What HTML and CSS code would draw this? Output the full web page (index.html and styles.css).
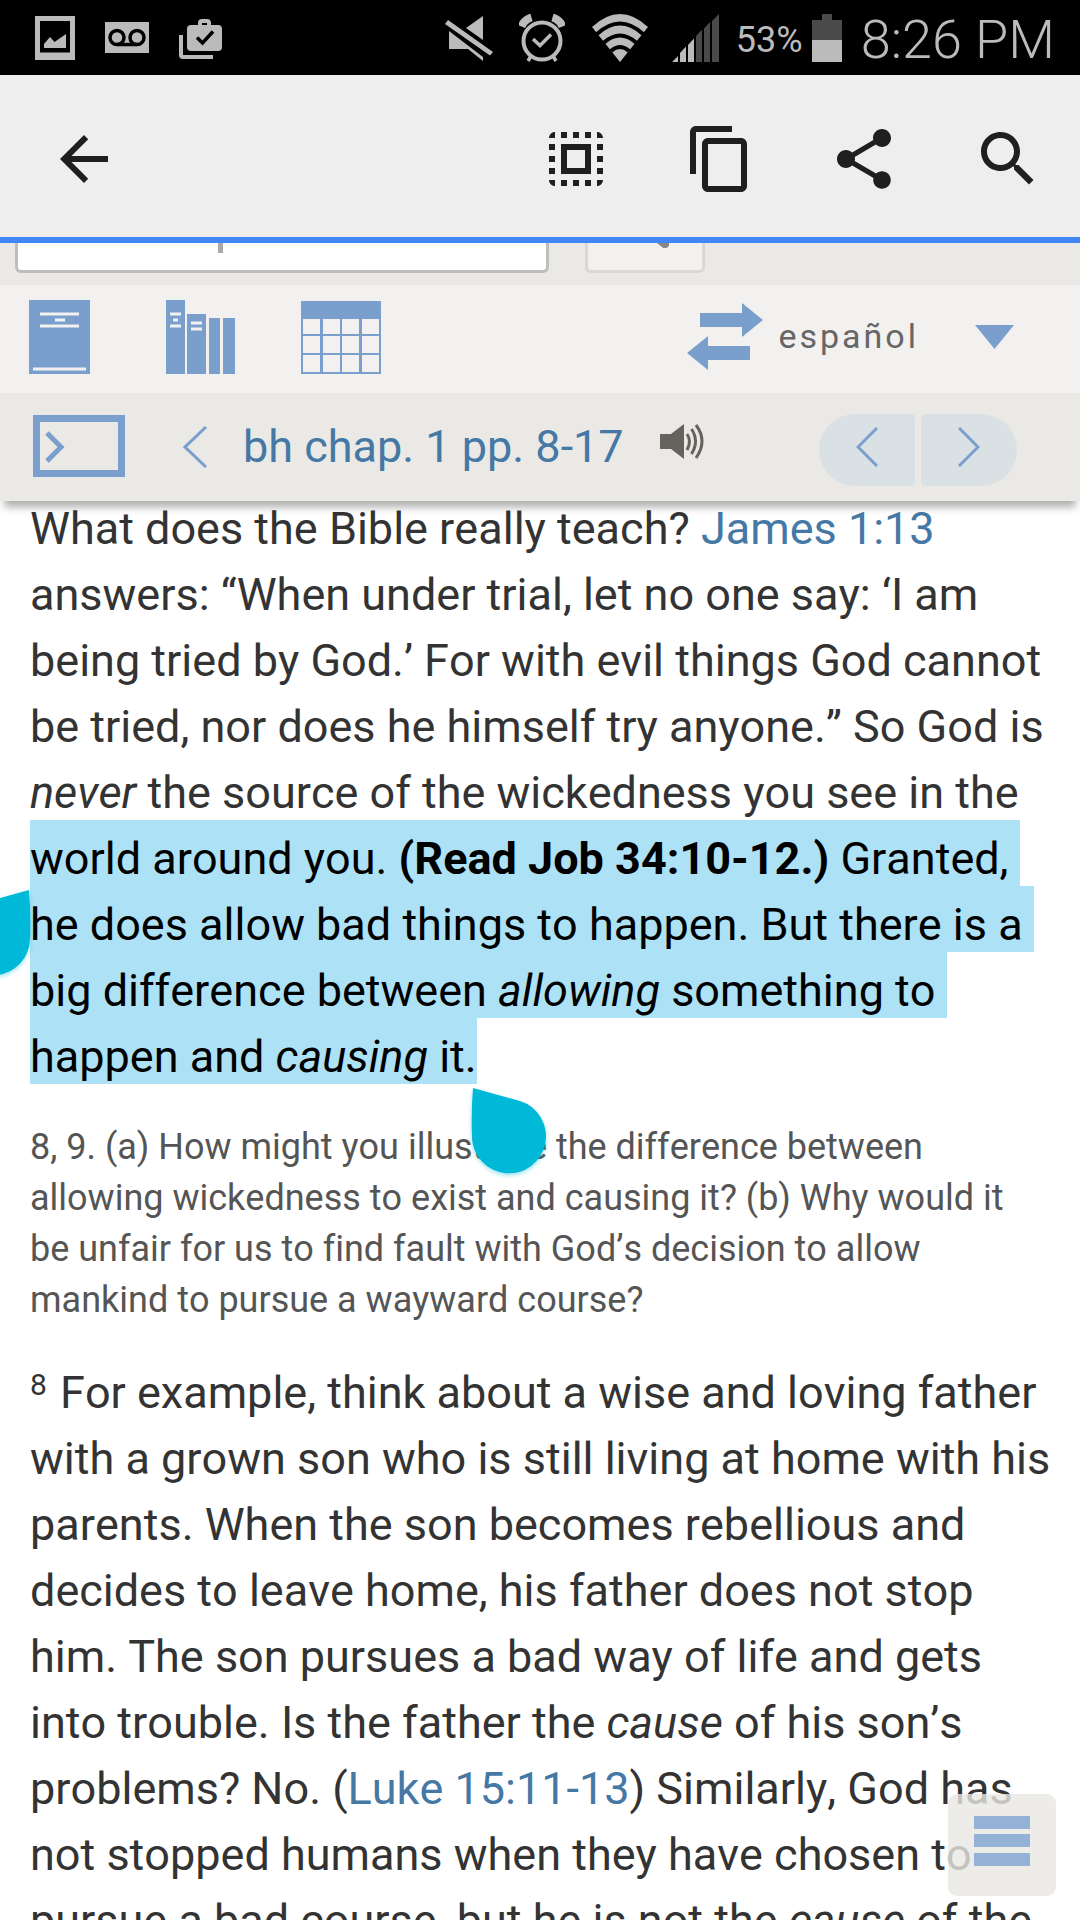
FILE: index.html
```html
<!DOCTYPE html>
<html lang="en">
<head>
<meta charset="utf-8">
<meta name="viewport" content="width=device-width, initial-scale=1">
<title>bh chap. 1 pp. 8-17</title>
<link rel="stylesheet" href="styles.css">
</head>
<body>
<div class="status">
  <div class="status-left">
    <svg width="40" height="44" viewBox="0 0 40 44"><path fill="#bbb" fill-rule="evenodd" d="M0 0h40v44H0zM5 5v31.500h30V5z"/><path fill="#bbb" d="M9 32v-4l6-7 4.500 5L31 18v14z"/></svg>
    <svg width="44" height="44" viewBox="0 0 44 44"><path fill="#bbb" d="M0 6h44v31H0z"/><g fill="none" stroke="#000" stroke-width="3.500"><circle cx="12" cy="21.500" r="7"/><circle cx="32" cy="21.500" r="7"/><path d="M12 28.500h20"/></g></svg>
    <svg width="44" height="44" viewBox="0 0 44 44"><path fill="none" stroke="#bbb" stroke-width="4" d="M2 19v20q0 2 2 2h30"/><rect x="8" y="9" width="35" height="26" rx="4" fill="#bbb"/><path fill="none" stroke="#bbb" stroke-width="4" d="M21 10V7q0-2 2-2h5q2 0 2 2v3"/><path fill="none" stroke="#000" stroke-width="3.500" d="M18 21.500l5.500 5.500L34 15.500"/></svg>
  </div>
  <div class="status-right">
    <svg width="48" height="48" viewBox="0 0 48 48" fill="#bbb"><path d="M3 6L48 38l-3 3.500L0 10zM38 2v24L21 14zM4 17l34 26v4L23 35H4z"/></svg>
    <svg class="alarm" width="46" height="48" viewBox="0 0 46 48"><g fill="none" stroke="#bbb"><circle cx="23" cy="27" r="18.500" stroke-width="4"/><path stroke-width="3.500" d="M14 25l7 6.500 11-11M12 42l-3 5M34 42l3 5"/><path stroke-width="8" d="M2.500 12.500q3-7 10-9M43.500 12.500q-3-7-10-9"/></g></svg>
    <svg class="wifi" width="56" height="48" viewBox="0 0 56 48"><path fill="#bbb" d="M28 48L0 13Q28-13 56 13z"/><g fill="none" stroke="#000" stroke-width="4"><path d="M5 20Q28-1 51 20M12 28.500q16-14 32 0M19 37q9-8 18 0"/></g></svg>
    <svg width="48" height="48" viewBox="0 0 48 48"><path fill="#bbb" d="M0 48l6-6v6zM8 48v-9l6-6.500V48zM16 48V31l6-6.500V48z"/><path fill="#4a4a4a" d="M24 48V22l6-6.500V48zM32 48V14.500l6-6.500V48zM40 48V7l7-7v48z"/></svg>
    <span class="percent">53%</span>
    <svg class="battery" width="30" height="48" viewBox="0 0 30 48"><path fill="#4a4a4a" d="M0 6h10V0h10v6h10v20H0z"/><path fill="#bbb" d="M0 26h30v22H0z"/></svg>
    <span class="clock">8:26 PM</span>
  </div>
</div>

<div class="appbar">
  <button class="bar-button back" aria-label="Back"><svg viewBox="0 0 24 24"><path d="M20 11H7.830l5.590-5.590L12 4l-8 8 8 8 1.410-1.410L7.830 13H20z"/></svg></button>
  <button class="bar-button" aria-label="Select all"><svg viewBox="0 0 24 24"><path d="M3 5h2V3c-1.100 0-2 .9-2 2zm0 8h2v-2H3v2zm4 8h2v-2H7v2zM3 9h2V7H3v2zm10-6h-2v2h2V3zm6 0v2h2c0-1.100-.9-2-2-2zM5 21v-2H3c0 1.100.9 2 2 2zm-2-4h2v-2H3v2zM9 3H7v2h2V3zm2 18h2v-2h-2v2zm8-8h2v-2h-2v2zm0 8c1.100 0 2-.9 2-2h-2v2zm0-12h2V7h-2v2zm0 8h2v-2h-2v2zm-4 4h2v-2h-2v2zm0-16h2V3h-2v2zM7 17h10V7H7v10zm2-8h6v6H9V9z"/></svg></button>
  <button class="bar-button" aria-label="Copy"><svg viewBox="0 0 24 24"><path d="M16 1H4c-1.100 0-2 .9-2 2v14h2V3h12V1zm3 4H8c-1.100 0-2 .9-2 2v14c0 1.100.9 2 2 2h11c1.100 0 2-.9 2-2V7c0-1.100-.9-2-2-2zm0 16H8V7h11v14z"/></svg></button>
  <button class="bar-button" aria-label="Share"><svg viewBox="0 0 24 24"><path d="M18 16.080c-.76 0-1.440.3-1.960.77L8.910 12.700c.05-.23.09-.46.09-.7s-.04-.47-.09-.7l7.050-4.110c.54.5 1.250.81 2.040.81 1.660 0 3-1.340 3-3s-1.340-3-3-3-3 1.340-3 3c0 .24.04.47.09.7L8.040 9.810C7.500 9.310 6.790 9 6 9c-1.660 0-3 1.340-3 3s1.340 3 3 3c.79 0 1.500-.31 2.040-.81l7.120 4.160c-.05.21-.08.43-.08.65 0 1.610 1.310 2.920 2.920 2.920s2.920-1.310 2.920-2.920-1.310-2.920-2.920-2.920z"/></svg></button>
  <button class="bar-button" aria-label="Search"><svg viewBox="0 0 24 24"><path d="M15.500 14h-.79l-.28-.27C15.410 12.590 16 11.110 16 9.500 16 5.910 13.090 3 9.500 3S3 5.910 3 9.500 5.910 16 9.500 16c1.610 0 3.090-.59 4.230-1.570l.27.28v.79l5 4.990L20.490 19l-4.990-5zm-6 0C7.010 14 5 11.990 5 9.500S7.010 5 9.500 5 14 7.010 14 9.500 11.990 14 9.500 14z"/></svg></button>
</div>

<header class="site">
  <form class="search-row">
    <input class="search-box" type="text" aria-label="Search">
    <button class="search-button" type="button" aria-label="Search"><svg width="12" height="5" viewBox="0 0 12 5"><path fill="#888682" d="M0 0h12v3q-4 4-7 1z"/></svg></button>
  </form>
  <nav class="tools">
    <a class="tool" href="#" aria-label="Bible"><svg width="61" height="74" viewBox="0 0 61 74"><path fill="#7a9fcd" d="M0 0h61v74H0z"/><path stroke="#f2f1ef" stroke-width="3" d="M11 14h39M26 20h10M11 26h39M4 69h53"/></svg></a>
    <a class="tool library" href="#" aria-label="Publications"><svg width="69" height="74" viewBox="0 0 69 74"><path fill="#7a9fcd" d="M0 0h19v74H0zM21 14h19v60H21zM43 18h11v56H43zM57 18h12v56H57z"/><path stroke="#f2f1ef" stroke-width="3" d="M4 14h11M7 20h5M4 26h11M25 23h11M25 29h11"/></svg></a>
    <a class="tool" href="#" aria-label="Meetings"><svg width="80" height="74" viewBox="0 0 80 74"><path fill="#7a9fcd" fill-rule="evenodd" d="M0 1h80v73H0zM2 19v15h17V19zM22 19v15h17V19zM41 19v15h17V19zM61 19v15h17V19zM2 36v17h17V36zM22 36v17h17V36zM41 36v17h17V36zM61 36v17h17V36zM2 55v17h17V55zM22 55v17h17V55zM41 55v17h17V55zM61 55v17h17V55z"/></svg></a>
    <a class="language" href="#"><svg width="76" height="68" viewBox="0 0 76 68"><path fill="#7a9fcd" d="M13 11h42V1l21 17-21 17V25H13zM63 44H21V34L0 51l21 17V58h42z"/></svg><span>español</span></a>
    <button class="more" aria-label="More languages"><svg width="39" height="24" viewBox="0 0 39 24"><path fill="#7a9fcd" d="M0 0h39L19.500 24z"/></svg></button>
  </nav>
  <nav class="chapter">
    <button class="plain" aria-label="Contents"><svg width="92" height="62" viewBox="0 0 92 62"><g fill="none" stroke="#7a9fcd"><path stroke-width="7" d="M3.500 3.500h85v55h-85z"/><path stroke-width="5" d="M14 18l14 14-14 14"/></g></svg></button>
    <a class="up" href="#" aria-label="Up"><svg width="24" height="42" viewBox="0 0 24 42"><path fill="none" stroke="#7a9fcd" stroke-width="3" d="M23 1L2 21l21 20"/></svg></a>
    <a class="crumb" href="#">bh chap. 1 pp. 8-17</a>
    <button class="plain audio" aria-label="Play audio"><svg width="44" height="36" viewBox="0 0 44 36"><path fill="#66625e" d="M0 10h11L24 0v35L11 25H0z"/><g fill="none" stroke="#66625e" stroke-width="3"><path d="M27 10q5 7 0 16M31.500 5q8 12 0 25M36 1q12 16 0 33"/></g></svg></button>
    <div class="pager">
      <button class="page prev" aria-label="Previous"><svg width="22" height="40" viewBox="0 0 22 40"><path fill="none" stroke="#7a9fcd" stroke-width="3" d="M21 1L2 20l19 19"/></svg></button>
      <button class="page next" aria-label="Next"><svg width="22" height="40" viewBox="0 0 22 40"><path fill="none" stroke="#7a9fcd" stroke-width="3" d="M1 1l19 19L1 39"/></svg></button>
    </div>
  </nav>
</header>

<main class="article">
  <p class="body">What does the Bible really teach? <a href="#">James 1:13</a> answers: “When under trial, let no one say: ‘I am being tried by God.’ For with evil things God cannot be tried, nor does he himself try anyone.” So God is <em>never</em> the source of the wickedness you see in the <mark>world around you. <strong>(Read Job 34:10-12.)</strong> Granted, he does allow bad things to happen. But there is a big difference between <em>allowing</em> something to happen and <em>causing</em> it.</mark>
    <svg class="handle handle-start" width="76" height="92" viewBox="0 0 76 92"><path d="M74 1Q76 25 75 50A37 37 0 1 1 27 14z"/></svg>
    <svg class="handle handle-end" width="76" height="92" viewBox="0 0 76 92"><path d="M2 1Q0 25 1 50A37 37 0 1 0 49 14z"/></svg>
  </p>
  <p class="question">8, 9. (a) How might you illustrate the difference between allowing wickedness to exist and causing it? (b) Why would it be unfair for us to find fault with God’s decision to allow mankind to pursue a wayward course?</p>
  <p class="body"><sup>8</sup> For example, think about a wise and loving father with a grown son who is still living at home with his parents. When the son becomes rebellious and decides to leave home, his father does not stop him. The son pursues a bad way of life and gets into trouble. Is the father the <em>cause</em> of his son’s problems? No. (<a href="#">Luke 15:11-13</a>) Similarly, God has not stopped humans when they have chosen to pursue a bad course, but he is not the <em>cause</em> of the</p>
</main>

<button class="menu" aria-label="Menu"><svg width="56" height="50" viewBox="0 0 56 50"><path fill="#7a9fcd" d="M0 0h56v13H0zM0 18h56v13H0zM0 37h56v13H0z"/></svg></button>
</body>
</html>
```

FILE: styles.css
```css
* { box-sizing: border-box; }

body {
  position: relative;
  display: flex;
  flex-direction: column;
  height: 100vh;
  margin: 0;
  overflow: hidden;
  background: #fff;
  color: #333;
  font-family: Roboto, sans-serif;
  font-size: 45px;
  font-kerning: none;
  font-variant-ligatures: none;
}

button {
  margin: 0;
  padding: 0;
  border: 0;
  background: none;
  font: inherit;
}

svg { display: block; flex: none; }

a { color: #4578a4; text-decoration: none; }

.status {
  display: flex;
  flex: none;
  align-items: center;
  justify-content: space-between;
  height: 75px;
  padding: 0 25px 0 35px;
  background: #000;
  color: #bbb;
}

.status-left { display: flex; gap: 30px; }
.status-right { display: flex; align-items: center; }
.status-right .alarm { margin-left: 26px; }
.status-right .wifi { margin: 0 24px 0 27px; }
.percent { margin-left: 16px; padding-top: 4px; font-size: 36px; line-height: 48px; }
.battery { margin: 0 19px 0 9px; }
.clock { padding-top: 4px; font-size: 54px; font-weight: 300; line-height: 72px; }

.appbar {
  display: flex;
  flex: none;
  height: 168px;
  background: #eee;
  box-shadow: inset 0 -6px #4285f4;
}

.bar-button {
  display: flex;
  align-items: center;
  justify-content: center;
  width: 144px;
}

.bar-button svg { width: 72px; height: 72px; fill: #1f1f1f; }
.back { margin-right: auto; padding-left: 24px; }

.site {
  position: relative;
  z-index: 1;
  flex: none;
  background: #eae9e5;
  box-shadow: 0 10px 8px -4px rgba(0, 0, 0, .32);
}

.search-row {
  display: flex;
  gap: 36px;
  height: 42px;
  padding: 0 15px;
}

.search-box {
  width: 534px;
  height: 30px;
  border: 3px solid #bebebe;
  border-top: 0;
  border-radius: 0 0 6px 6px;
  background: linear-gradient(#a9a9a9, #a9a9a9) 200px 0 / 5px 10px no-repeat #fff;
}

.search-button {
  display: flex;
  justify-content: center;
  width: 120px;
  height: 30px;
  padding-left: 36px;
  border: 3px solid #d9d8d3;
  border-top: 0;
  border-radius: 0 0 6px 6px;
  background: #f2f1ef;
}

.tools {
  display: flex;
  align-items: center;
  height: 108px;
  padding: 0 66px 0 29px;
  background: #f2f1ef;
}

.tool { padding-bottom: 4px; }
.library { margin: 0 66px 0 76px; }

.language {
  display: flex;
  align-items: center;
  gap: 15px;
  margin-left: auto;
  padding-bottom: 6px;
  color: #666;
  font-size: 34px;
  letter-spacing: 3px;
}

.more { margin-left: 56px; padding-bottom: 4px; }

.chapter {
  display: flex;
  align-items: center;
  height: 108px;
  padding: 0 63px 0 33px;
}

.chapter .plain { padding-bottom: 2px; }
.up { margin: 0 36px 0 58px; }
.crumb { padding-bottom: 2px; }
.chapter .audio { margin-left: 36px; padding-bottom: 10px; }
.pager { display: flex; gap: 6px; margin-left: auto; padding-top: 6px; }

.page {
  display: flex;
  align-items: center;
  justify-content: center;
  width: 96px;
  height: 72px;
  padding-bottom: 6px;
  background: #dae1e4;
}

.prev { border-radius: 36px 4px 4px 36px; }
.next { border-radius: 4px 36px 36px 4px; }

.article {
  flex: 1;
  min-height: 0;
  margin-top: -5px;
  padding: 0 28px 0 30px;
  overflow: hidden;
}

.body {
  position: relative;
  margin: 0;
  font-size: 45px;
  line-height: 66px;
}

.question {
  margin: 32px 0 34px;
  padding-right: 20px;
  color: #555;
  font-size: 36px;
  line-height: 51px;
}

mark {
  padding: 12px 0 1px;
  background: #ade1f6;
  color: #000;
  white-space: pre-wrap;
}

sup {
  padding-right: 2px;
  font-size: 30px;
  line-height: 0;
  vertical-align: 13px;
}

.handle {
  position: absolute;
  fill: #00b8d7;
  filter: drop-shadow(0 2px 2px rgba(0, 184, 215, .4));
}

.handle-start { left: -75px; top: 393px; }
.handle-end { left: 441px; top: 591px; }

.menu {
  position: absolute;
  right: 24px;
  bottom: 24px;
  z-index: 1;
  display: flex;
  align-items: center;
  justify-content: center;
  width: 108px;
  height: 102px;
  padding-bottom: 8px;
  border-radius: 9px;
  background: #eae8e4;
  opacity: .8;
}
```
